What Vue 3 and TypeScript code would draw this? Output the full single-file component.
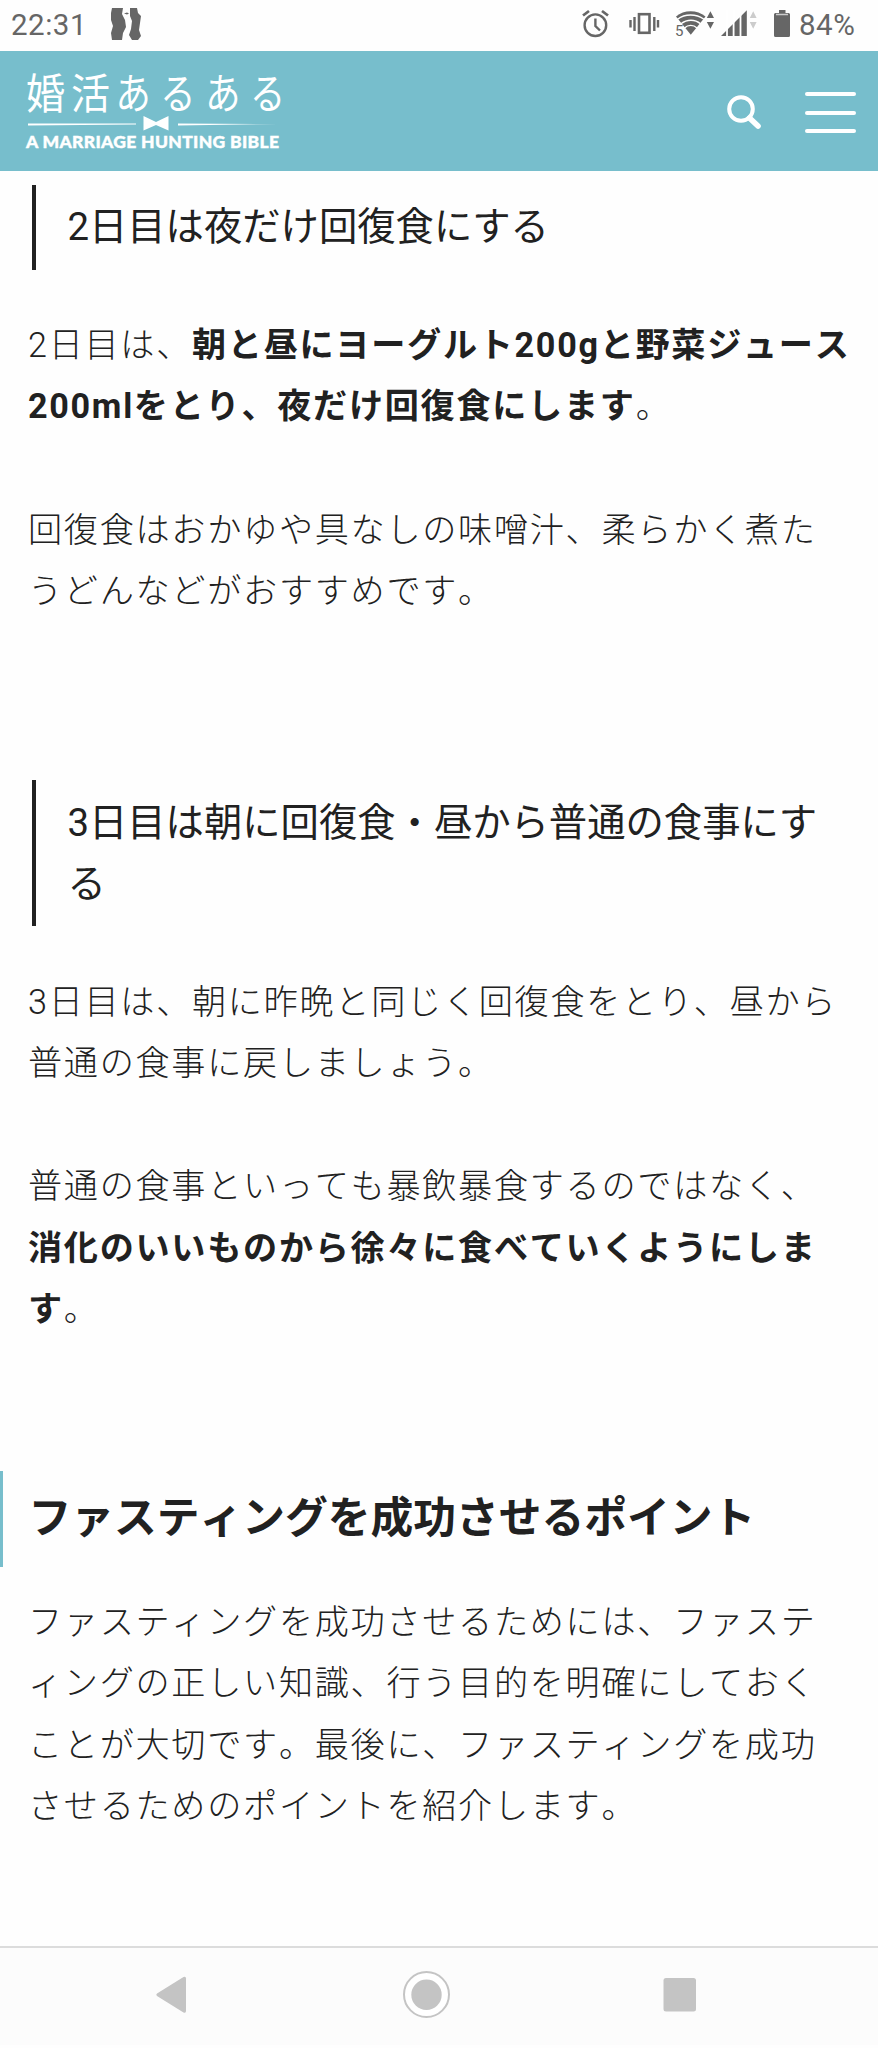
<script setup lang="ts">
interface Run { text: string; strong?: boolean }
type Line = Run[]
interface Block { kind: 'h2' | 'h3' | 'p'; id: string; lines: Line[] }

const plain = (text: string): Line => [{ text }]
const bold = (text: string): Run => ({ text, strong: true })

const blocks: Block[] = [
  { kind: 'h3', id: 'day2', lines: [plain('2日目は夜だけ回復食にする')] },
  {
    kind: 'p', id: 'day2-menu', lines: [
      [{ text: '2日目は、' }, bold('朝と昼にヨーグルト200gと野菜ジュース')],
      [bold('200mlをとり、夜だけ回復食にします'), { text: '。' }],
    ],
  },
  { kind: 'p', id: 'day2-tips', lines: [plain('回復食はおかゆや具なしの味噌汁、柔らかく煮た'), plain('うどんなどがおすすめです。')] },
  { kind: 'h3', id: 'day3', lines: [plain('3日目は朝に回復食・昼から普通の食事にす'), plain('る')] },
  { kind: 'p', id: 'day3-menu', lines: [plain('3日目は、朝に昨晩と同じく回復食をとり、昼から'), plain('普通の食事に戻しましょう。')] },
  {
    kind: 'p', id: 'day3-tips', lines: [
      plain('普通の食事といっても暴飲暴食するのではなく、'),
      [bold('消化のいいものから徐々に食べていくようにしま')],
      [bold('す'), { text: '。' }],
    ],
  },
  { kind: 'h2', id: 'points', lines: [plain('ファスティングを成功させるポイント')] },
  {
    kind: 'p', id: 'points-intro', lines: [
      plain('ファスティングを成功させるためには、ファステ'),
      plain('ィングの正しい知識、行う目的を明確にしておく'),
      plain('ことが大切です。最後に、ファスティングを成功'),
      plain('させるためのポイントを紹介します。'),
    ],
  },
]
</script>

<template>
  <div class="screen">
    <div class="status">
      <span class="clock">22:31</span>
      <svg class="notif" width="32" height="32" viewBox="0 0 32 32">
        <path d="M2 0H13L12 6 15 12 16 19 13 25 12 32H2L1 25 3 18 1 12 1 5Z" />
        <path d="M20 0H27L28 5 31 8 30 15 29 22 31 28 28 32H22L19 27 21 21 22 13 20 8Z" />
        <path d="M14 5.500L17 4.500 19 5.500 17 6.500Z" />
      </svg>
      <svg class="tray" width="214" height="36" viewBox="0 0 214 36">
        <g fill="none" stroke="#666" stroke-width="2.400">
          <circle cx="17.400" cy="18.200" r="10.800" />
          <path d="M17.400 11.500V19L22 23.500" />
          <path d="M5 8.500L11 4M24 4L30 8.500" stroke-width="2.800" />
          <rect x="61" y="7.200" width="10.500" height="18.600" stroke-width="2.600" />
          <path d="M56.500 10V24M52.500 13V20.500M76.300 10V24M80 13V20.500" stroke-width="2.400" />
        </g>
        <path d="M98 9.500C106 2.500 119 2.500 127.500 9.500L112.800 27.800Z" fill="#666" />
        <g fill="none" stroke="#fff" stroke-width="1.400">
          <path d="M99.500 12.300C107 6.500 118 6.500 126 12.300M103 16.700C109 12 117 12 122.500 16.700M106.500 21C110 17.500 115.500 17.500 119 21" />
        </g>
        <path d="M96 18H104.500L106.500 22V31H96Z" fill="#fff" />
        <text x="97" y="29.300" class="band">5</text>
        <path d="M128.800 11L132.400 4.200 136 11ZM128.800 15L132.400 21.800 136 15Z" fill="#666" />
        <path d="M143 29L168.800 3.200V29Z" fill="#666" />
        <path d="M149 3V30M155.600 3V30M162.500 3V30" stroke="#fff" stroke-width="1.800" />
        <path d="M171.800 11L175.200 4.200 178.600 11ZM171.800 15L175.200 21.800 178.600 15Z" fill="#ccc" />
        <path d="M201 3H207.500V6H210.500Q212 6 212 7.500V28.500Q212 30 210.500 30H197.500Q196 30 196 28.500V7.500Q196 6 197.500 6H201Z" fill="#666" />
        <path d="M198 7.500H210" stroke="#ccc" stroke-width="1.500" />
      </svg>
      <span class="charge">84%</span>
    </div>

    <header class="bar">
      <svg class="logo" width="260" height="88" viewBox="0 0 260 88">
        <text x="0" y="41.300" class="brand" transform="scale(.93 1)">婚活</text>
        <text x="0" y="41.300" class="brand kana" transform="translate(89.500) scale(.84 1)">あるある</text>
        <path d="M2 55.500L110 55.500V56.500L2 57.500ZM152 55.500L252 56 152 57.500Z" fill="#fff" />
        <path d="M117.500 48L130 54 142.500 48V62.500L130 57 117.500 62.500Z" fill="#fff" />
        <text x="0" y="79.700" class="tagline" textLength="253">A MARRIAGE HUNTING BIBLE</text>
      </svg>
      <svg class="search" width="36" height="36" viewBox="0 0 36 36">
        <circle cx="15" cy="15" r="11.800" fill="none" stroke="#fff" stroke-width="4" />
        <path d="M23.500 24L32 32" stroke="#fff" stroke-width="5.600" stroke-linecap="round" />
      </svg>
      <div class="menu"><i></i><i></i><i></i></div>
    </header>

    <main class="article">
      <component :is="b.kind" v-for="b in blocks" :key="b.id" :class="[b.kind, b.id]">
        <span v-for="(line, i) in b.lines" :key="i" class="line"><span
          v-for="(run, j) in line" :key="j" :class="{ strong: run.strong }">{{ run.text }}</span></span>
      </component>
    </main>

    <nav class="nav">
      <svg width="878" height="97" viewBox="0 0 878 97">
        <g fill="#c4c4c4" transform="translate(0 -2)">
          <path d="M157 47.500L183.500 31Q186 30 186 32.500V65Q186 67.500 183.500 66.500L157 50Q155.500 48.700 157 47.500Z" />
          <circle cx="426.500" cy="48.500" r="22.500" fill="#fff" stroke="#c4c4c4" stroke-width="2" />
          <circle cx="426.500" cy="48.700" r="15.200" />
          <rect x="663.500" y="32" width="32.500" height="33.500" rx="2.500" />
        </g>
      </svg>
    </nav>
  </div>
</template>

<style>
body { margin: 0; background: #fff; }
</style>

<style scoped>
.screen {
  width: 878px;
  height: 2048px;
  display: flex;
  flex-direction: column;
  overflow: hidden;
  background: #fefefe;
  color: #212121;
  font-family: Roboto, "Noto Sans CJK JP", sans-serif;
  font-kerning: none;
}
.status {
  height: 51px;
  flex: none;
  display: flex;
  align-items: flex-start;
  color: #666;
  fill: #666;
  font-size: 29.5px;
  line-height: 51px;
  box-sizing: border-box;
}
.clock { width: 99px; padding-left: 11px; letter-spacing: .5px; }
.notif { margin-top: 8px; }
.tray { margin: 7px 0 0 436px; }
.charge { margin-left: 7px; white-space: nowrap; letter-spacing: .5px; }
.band { font: 15px Roboto, sans-serif; fill: #666; }
.bar {
  height: 120px;
  flex: none;
  display: flex;
  background: #77becc;
}
.logo { margin: 17px 0 0 26px; overflow: visible; }
.brand { font: 400 42px "Noto Sans CJK JP", sans-serif; font-kerning: none; fill: #fff; letter-spacing: 6.400px; }
.kana { letter-spacing: 11.400px; }
.tagline { font: 900 17.500px Lato, sans-serif; fill: #fff; stroke: #fff; stroke-width: .4px; }
.search { margin: 43px 0 0 440px; }
.menu {
  width: 51px;
  height: 41px;
  margin: 41px 0 0 43px;
  display: flex;
  flex-direction: column;
  justify-content: space-between;
}
.menu i { height: 4px; border-radius: 2px; background: #fff; }
.article { height: 1776px; flex: none; }
.h2, .h3, .p { margin: 0; font-weight: 400; }
.line { display: block; white-space: nowrap; }
.h3 {
  margin-left: 32px;
  padding: 11.500px 0 11.500px 31.400px;
  border-left: 4px solid #212121;
  font-size: 38.350px;
  line-height: 61.500px;
}
.day2.h3 { padding: 11px 0 12px 31.400px; }
.h2 {
  padding: 17px 0 17px 25.500px;
  border-left: 3px solid #77becc;
  font-size: 42.750px;
  line-height: 61.500px;
  font-weight: 700;
}
.p {
  padding-left: 28px;
  font-size: 34.150px;
  line-height: 61.450px;
  letter-spacing: 1.700px;
  font-weight: 300;
}
.strong { font-weight: 700; }
.day2 { margin-top: 14px; }
.day2-menu { margin-top: 45.500px; }
.day2-tips { margin-top: 62px; }
.day3 { margin-top: 157.500px; }
.day3-menu { margin-top: 45.500px; }
.day3-tips { margin-top: 61.500px; }
.points { margin-top: 130.500px; }
.points-intro { margin-top: 25.400px; }
.nav {
  height: 97px;
  flex: none;
  margin-top: -1px;
  border-top: 2px solid #dcdcdc;
  background: #fcfcfc;
}
.nav svg { display: block; }
</style>
